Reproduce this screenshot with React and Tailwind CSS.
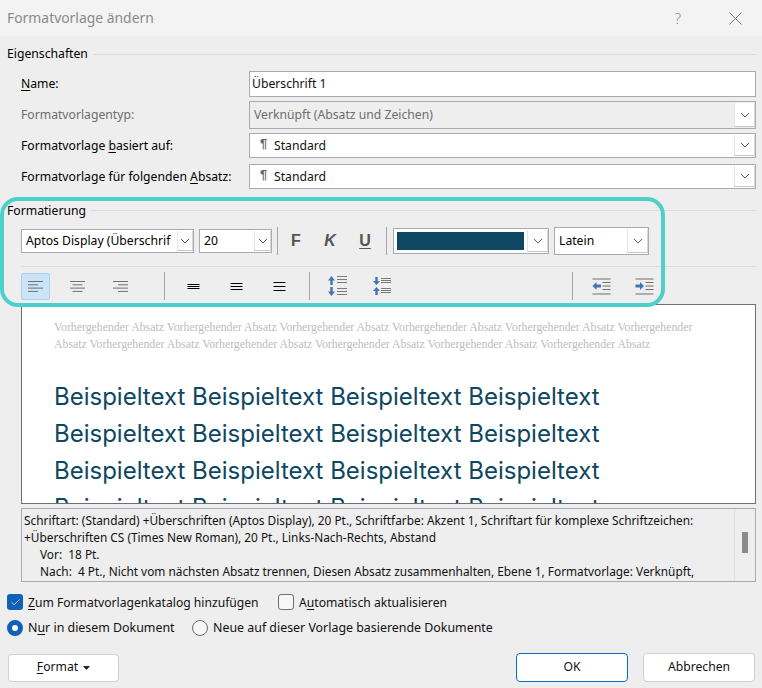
import { Check } from 'lucide-react'

const UI = "font-['Noto_Sans','Open_Sans',sans-serif]"

function Chevron() {
  return (
    <svg width="10" height="6" viewBox="0 0 10 6">
      <path d="M1 1 L5 5 L9 1" fill="none" stroke="#555" strokeWidth="1" />
    </svg>
  )
}

function DropBtn({ className = 'w-[21px]' }) {
  return (
    <span className={`flex items-center justify-center self-stretch m-px mr-0 bg-white border-l border-r border-b border-l-[#e4e4e4] border-r-[#d8d8d8] border-b-[#c8c8c8] ${className}`}>
      <Chevron />
    </span>
  )
}

function Underlined({ children }) {
  return <span className="underline underline-offset-2">{children}</span>
}

function FieldRow({ label, disabled, children, chevron, h = 'h-[25px]', mt = '' }) {
  return (
    <div className={`flex items-center ${mt}`}>
      <div className={`w-[243px] pl-[15px] pt-px whitespace-nowrap text-[12.2px] ${disabled ? 'text-[#6d6d6d]' : 'text-black'}`}>{label}</div>
      <div className={`flex-1 flex items-center ${h} border border-[#a9a9b1] ${disabled ? 'bg-[#eeeeee] text-[#6d6d6d]' : 'bg-white text-[#111]'} text-[12.2px]`}>
        <div className="flex-1 pl-[2px] pt-px">{children}</div>
        {chevron && <DropBtn />}
      </div>
    </div>
  )
}

function StyleName({ children }) {
  return (
    <span className="flex items-center pl-[8px]">
      <span className="w-[14px] text-[13px] font-bold text-[#666] leading-none -mt-[5px] font-['Liberation_Sans',sans-serif]">¶</span>
      <span>{children}</span>
    </span>
  )
}

function Sep() {
  return <span className="block w-px h-7 shrink-0 bg-[#a6a6a6]" />
}

function AlignIcon({ rows }) {
  return (
    <svg width="15" height="11" viewBox="0 0 15 11">
      {rows.map(([x, w], i) => (
        <rect key={i} x={x} y={i * 3.3} width={w} height="1" fill="#707070" />
      ))}
    </svg>
  )
}

function SpacingIcon({ ys }) {
  return (
    <svg width="13" height="10" viewBox="0 0 13 10">
      {ys.map((y) => (
        <rect key={y} x="0.5" y={y} width="12" height="1" fill="#000" />
      ))}
    </svg>
  )
}

function LineSpaceMore() {
  return (
    <svg width="19" height="20" viewBox="0 0 19 20">
      <path d="M3.5 0 L7 4.5 H4.7 V9 H2.3 V4.5 H0 Z" fill="#3f76b0" />
      <path d="M3.5 20 L7 15.5 H4.7 V11 H2.3 V15.5 H0 Z" fill="#3f76b0" />
      {[0, 3, 6, 12, 15, 18].map((y) => (
        <rect key={y} x="9" y={y} width="10" height="1" fill="#7a7a7a" />
      ))}
    </svg>
  )
}

function LineSpaceLess() {
  return (
    <svg width="18" height="18" viewBox="0 0 18 18">
      <path d="M3.5 8 L7 4 H4.7 V0 H2.3 V4 H0 Z" fill="#3f76b0" />
      <path d="M3.5 10 L7 14 H4.7 V18 H2.3 V14 H0 Z" fill="#3f76b0" />
      {[1, 3, 5, 11, 13, 15].map((y) => (
        <rect key={y} x="8" y={y} width="10" height="1" fill="#7a7a7a" />
      ))}
    </svg>
  )
}

function IndentIcon({ dir }) {
  return (
    <svg width="19" height="17" viewBox="0 0 19 17">
      {[0.5, 15.5].map((y) => (
        <rect key={y} x="0.5" y={y} width="18" height="1" fill="#6f6f6f" />
      ))}
      {[4, 7.5, 11].map((y) => (
        <rect key={y} x="10.5" y={y} width="8" height="1" fill="#6f6f6f" />
      ))}
      {dir === 'left' ? (
        <path d="M0.5 8 L4.5 4 V6.5 H9 V9.5 H4.5 V12 Z" fill="#3f76b0" />
      ) : (
        <path d="M9 8 L5 4 V6.5 H0.5 V9.5 H5 V12 Z" fill="#3f76b0" />
      )}
    </svg>
  )
}

const PREV = Array(11).fill('Vorhergehender Absatz').join(' ')
const SAMPLE = 'Beispieltext Beispieltext Beispieltext Beispieltext'

export default function App() {
  return (
    <div className={`${UI} w-[762px] h-[688px] overflow-hidden bg-[#eeeeee] text-black flex flex-col relative`}>
      {/* title bar */}
      <div className="h-9 shrink-0 bg-[#f3f3f3] flex items-center pl-[7px]">
        <span className="flex-1 text-[13.9px] text-[#8a8a8a]">Formatvorlage ändern</span>
        <span className="text-[15px] font-light text-[#8c8c8c] mr-[48px]">?</span>
        <svg width="13" height="13" viewBox="0 0 13 13" className="mr-[20px]">
          <path d="M0.5 0.5 L12.5 12.5 M12.5 0.5 L0.5 12.5" stroke="#7a7a7a" strokeWidth="1" fill="none" />
        </svg>
      </div>

      <div className="flex-1 flex flex-col px-[6px]">
        <div className="flex items-center h-[18px] mt-[9px]">
          <span className="text-[12.2px] pl-px pt-px">Eigenschaften</span>
          <span className="flex-1 ml-[5px] h-px bg-[#dcdcdc]" />
        </div>

        <div className="flex flex-col mt-[8px]">
          <FieldRow label={<><Underlined>N</Underlined>ame:</>} h="h-[26px]">Überschrift 1</FieldRow>
          <FieldRow label="Formatvorlagentyp:" disabled chevron h="h-[28px]" mt="mt-[4px]"><span className="pl-[2px]">Verknüpft (Absatz und Zeichen)</span></FieldRow>
          <FieldRow label={<>Formatvorlage <Underlined>b</Underlined>asiert auf:</>} chevron mt="mt-[4px]"><StyleName>Standard</StyleName></FieldRow>
          <FieldRow label={<>Formatvorlage für folgenden <Underlined>A</Underlined>bsatz:</>} chevron mt="mt-[6px]"><StyleName>Standard</StyleName></FieldRow>
        </div>

        {/* Formatierung */}
        <div className="flex items-center h-[18px] mt-[13px]">
          <span className="text-[12.2px] pl-px">Formatierung</span>
          <span className="flex-1 ml-[5px] h-px mb-[2px] bg-[#dcdcdc]" />
        </div>

        <div className="flex items-center h-[28px] mt-[7px] pl-[15px] text-[12.2px]">
          <div className="w-[173px] h-[24px] flex items-center border border-[#a9a9b1] bg-white">
            <span className="flex-1 overflow-hidden whitespace-nowrap pl-[4px] pt-px">Aptos Display (Überschrif</span>
            <DropBtn className="w-[16px]" />
          </div>
          <div className="w-[73px] h-[24px] ml-[5px] flex items-center border border-[#a9a9b1] bg-white">
            <span className="flex-1 pl-[4px] pt-px">20</span>
            <DropBtn className="w-[17px]" />
          </div>
          <span className="ml-[5px]"><Sep /></span>
          <span className="w-[36px] text-center text-[16px] font-bold text-[#555] font-['Liberation_Sans',sans-serif]">F</span>
          <span className="w-[32px] text-center text-[16px] font-bold italic text-[#555] font-['Liberation_Sans',sans-serif]">K</span>
          <span className="w-[38px] text-center text-[16px] font-bold underline underline-offset-2 text-[#555] font-['Liberation_Sans',sans-serif]">U</span>
          <span className="ml-[2px]"><Sep /></span>
          <div className="ml-[6px] w-[156px] h-[26px] flex items-center border border-[#a9a9b1] bg-white pl-[3px]">
            <span className="w-[127px] h-[18px] bg-[#0e4761]" />
            <span className="flex-1" />
            <DropBtn />
          </div>
          <div className="ml-[5px] w-[95px] h-[28px] flex items-center border border-[#a9a9b1] bg-white">
            <span className="flex-1 pl-[4px] pt-px">Latein</span>
            <DropBtn />
          </div>
        </div>

        <div className="h-px bg-[#dcdcdc] ml-[15px] mt-[11px]" />

        <div className="flex items-center h-[28px] mt-[5px] pl-[15px]">
          <span className="w-[29px] h-[27px] flex items-center justify-center bg-[#cce4f7] border border-[#a8d0ef] rounded-[2px]">
            <AlignIcon rows={[[0, 15], [0, 10], [0, 15], [0, 10]]} />
          </span>
          <span className="w-[54px] flex justify-center"><AlignIcon rows={[[0, 15], [2.5, 10], [0, 15], [2.5, 10]]} /></span>
          <span className="w-[32px] flex justify-center"><AlignIcon rows={[[0, 15], [5, 10], [0, 15], [5, 10]]} /></span>
          <span className="ml-[28px]"><Sep /></span>
          <span className="w-[56px] flex justify-center"><SpacingIcon ys={[3, 5, 7]} /></span>
          <span className="w-[30px] flex justify-center"><SpacingIcon ys={[2, 5, 8]} /></span>
          <span className="w-[56px] flex justify-center"><SpacingIcon ys={[1, 5, 9]} /></span>
          <span className="ml-[2px]"><Sep /></span>
          <span className="w-[55px] flex justify-center"><LineSpaceMore /></span>
          <span className="w-[33px] flex justify-center"><LineSpaceLess /></span>
          <span className="ml-[174px]"><Sep /></span>
          <span className="w-[56px] flex justify-center"><IndentIcon dir="left" /></span>
          <span className="w-[30px] flex justify-center"><IndentIcon dir="right" /></span>
        </div>

        {/* preview */}
        <div className="mt-[4px] ml-[15px] h-[200px] shrink-0 bg-white border border-[#6f6f6f] overflow-hidden pl-[32px] pr-[40px]">
          <p className="mt-[14px] text-[11.8px] leading-[17px] text-[#bdbdbd] font-['Liberation_Serif',serif]">{PREV}</p>
          <div className="mt-[25px] text-[#0e4761] text-[24px] leading-[37px] font-['Inter',sans-serif] whitespace-nowrap">
            <div>{SAMPLE}</div>
            <div>{SAMPLE}</div>
            <div>{SAMPLE}</div>
            <div>{SAMPLE}</div>
          </div>
        </div>

        {/* description */}
        <div className="mt-[4px] ml-[15px] h-[74px] shrink-0 border border-[#a9a9b1] flex text-[11.85px] leading-[17px] text-[#111]">
          <div className="flex-1 overflow-hidden pl-[2px] pt-[3px]">
            <div className="whitespace-nowrap">Schriftart: (Standard) +Überschriften (Aptos Display), 20 Pt., Schriftfarbe: Akzent 1, Schriftart für komplexe Schriftzeichen:</div>
            <div className="whitespace-nowrap">+Überschriften CS (Times New Roman), 20 Pt., Links-Nach-Rechts, Abstand</div>
            <div className="pl-[16px]">Vor:&nbsp; 18 Pt.</div>
            <div className="pl-[16px] whitespace-nowrap">Nach:&nbsp; 4 Pt., Nicht vom nächsten Absatz trennen, Diesen Absatz zusammenhalten, Ebene 1, Formatvorlage: Verknüpft,</div>
          </div>
          <div className="w-[21px] shrink-0 border-l border-[#e0e0e0] flex justify-center pt-[23px]">
            <span className="w-[6px] h-[21px] bg-[#8a8a8a]" />
          </div>
        </div>

        {/* options */}
        <div className="flex items-center h-4 leading-4 mt-[12px] pl-px text-[12.13px] text-[#111]">
          <span className="w-4 h-4 rounded-[3px] bg-[#0f62b8] flex items-center justify-center"><Check size={11} color="#fff" strokeWidth={1.5} /></span>
          <span className="ml-[5px] w-[250px] pt-px"><Underlined>Z</Underlined>um Formatvorlagenkatalog hinzufügen</span>
          <span className="w-4 h-4 rounded-[3px] border border-[#6f6f6f] bg-[#f6f6f6]" />
          <span className="ml-[5px] pt-px">A<Underlined>u</Underlined>tomatisch aktualisieren</span>
        </div>
        <div className="flex items-center h-4 leading-4 mt-[10px] pl-px text-[12.4px] text-[#111]">
          <span className="w-4 h-4 rounded-full border-[5px] border-[#0f62b8] bg-white" />
          <span className="ml-[5px] w-[164px]">N<Underlined>u</Underlined>r in diesem Dokument</span>
          <span className="w-4 h-4 rounded-full border border-[#6f6f6f] bg-[#f6f6f6]" />
          <span className="ml-[5px]">Neue auf dieser Vorlage basierende Dokumente</span>
        </div>

        {/* buttons */}
        <div className="flex items-center mt-[17px] pl-[2px] pr-[1px] text-[12.2px] text-[#111]">
          <button className="w-[111px] h-[28px] flex items-center justify-center gap-[5px] bg-white border border-[#d0d0d0] rounded-[4px]">
            <span><Underlined>F</Underlined>ormat</span>
            <svg width="7" height="4" viewBox="0 0 7 4"><path d="M0 0 H7 L3.5 4 Z" fill="#222" /></svg>
          </button>
          <span className="flex-1" />
          <button className="w-[112px] h-[29px] bg-white border border-[#0f6cbd] rounded-[4px]">OK</button>
          <button className="ml-[15px] w-[112px] h-[29px] bg-white border border-[#d0d0d0] rounded-[4px]">Abbrechen</button>
        </div>
      </div>

      {/* teal highlight drawn over the screenshot */}
      <div className="absolute left-0 top-[197px] w-[665px] h-[110px] border-[4px] border-[#4bd0cb] rounded-[18px] pointer-events-none" />
    </div>
  )
}
